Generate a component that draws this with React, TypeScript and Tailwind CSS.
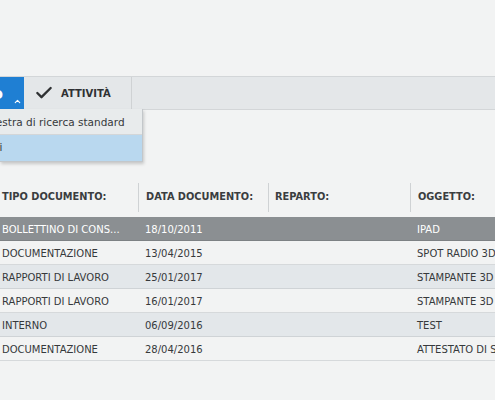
import React from 'react';
import { Check, ChevronUp } from 'lucide-react';

const rows = [
  { tipo: 'BOLLETTINO DI CONS...', data: '18/10/2011', reparto: '', oggetto: 'IPAD', selected: true },
  { tipo: 'DOCUMENTAZIONE', data: '13/04/2015', reparto: '', oggetto: 'SPOT RADIO 3D STAMPA' },
  { tipo: 'RAPPORTI DI LAVORO', data: '25/01/2017', reparto: '', oggetto: 'STAMPANTE 3D EVO' },
  { tipo: 'RAPPORTI DI LAVORO', data: '16/01/2017', reparto: '', oggetto: 'STAMPANTE 3D EVO' },
  { tipo: 'INTERNO', data: '06/09/2016', reparto: '', oggetto: 'TEST' },
  { tipo: 'DOCUMENTAZIONE', data: '28/04/2016', reparto: '', oggetto: 'ATTESTATO DI SERVIZIO' },
];

const font = { fontFamily: '"DejaVu Sans", Verdana, sans-serif' };

export default function App() {
  return (
    <div className="h-[400px] w-[495px] overflow-hidden bg-[#f2f3f3] text-[#36393b]" style={font}>
      <div className="h-[76px]" />

      {/* toolbar */}
      <div className="relative flex h-[34px] border-y border-[#d3d6d8] bg-[#e4e7e9]">
        <div className="relative w-[24px] overflow-hidden bg-[#1f7fd3]">
          <span className="absolute left-[-8px] top-[5px] text-[16px] font-bold text-white">o</span>
          <ChevronUp className="absolute bottom-[3px] left-[13px] h-[9px] w-[9px] text-white" strokeWidth={3} />
        </div>
        <div className="flex w-[108px] items-center gap-[7px] border-r border-[#cfd2d4] pl-[10px]">
          <Check className="h-[20px] w-[20px] text-[#2f3133]" strokeWidth={2.8} />
          <span className="text-[10px] font-bold text-[#2f3133]">ATTIVITÀ</span>
        </div>

        {/* dropdown */}
        <div className="absolute left-0 top-full z-10 w-[143px] overflow-hidden border-r border-b border-[#c3c7ca] bg-[#e8ebec] shadow-[1px_2px_3px_rgba(0,0,0,0.18)]">
          <div className="flex h-[26px] items-center whitespace-nowrap border-b border-[#d3d6d8] text-[10.5px]">
            <span className="ml-[-19px] mt-[2px]">Finestra di ricerca standard</span>
          </div>
          <div className="flex h-[26px] items-center whitespace-nowrap bg-[#b9d8ef] text-[10.5px]">
            <span className="ml-[-20px]">Filtri</span>
          </div>
        </div>
      </div>

      <div className="h-[66px]" />

      {/* header */}
      <div className="grid h-[41px] grid-cols-[138px_130px_142px_1fr] items-center whitespace-nowrap pt-[2px] text-[9.8px] font-bold text-[#3a3d40]">
        <div className="pl-[2px]">TIPO DOCUMENTO:</div>
        <div className="border-l border-[#cfd2d4] py-[7px] pl-[7px]">DATA DOCUMENTO:</div>
        <div className="border-l border-[#cfd2d4] py-[7px] pl-[6px]">REPARTO:</div>
        <div className="border-l border-[#cfd2d4] py-[7px] pl-[7px]">OGGETTO:</div>
      </div>

      {/* rows */}
      <div>
        {rows.map((r, i) => (
          <div
            key={i}
            className={
              'grid h-[24px] grid-cols-[138px_130px_142px_1fr] items-center whitespace-nowrap border-b pt-[1px] text-[10px] ' +
              (r.selected
                ? 'border-[#7d8184] bg-[#8b8f92] text-white'
                : i % 2 === 0
                ? 'border-[#cfd3d6] bg-[#e3e7ea]'
                : 'border-[#d6d9db] bg-[#f2f3f3]')
            }
          >
            <div className="overflow-hidden pl-[2px]">{r.tipo}</div>
            <div className="overflow-hidden pl-[7px]">{r.data}</div>
            <div className="overflow-hidden pl-[6px]">{r.reparto}</div>
            <div className="overflow-hidden pl-[7px]">{r.oggetto}</div>
          </div>
        ))}
      </div>
    </div>
  );
}
